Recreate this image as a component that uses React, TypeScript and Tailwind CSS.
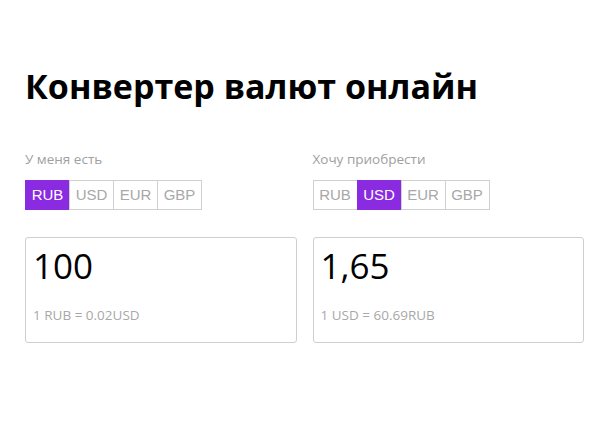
import { useState } from "react";

const currencies = ["RUB", "USD", "EUR", "GBP"];

function CurrencyBlock({
  label,
  selected,
  value,
  rate,
}: {
  label: string;
  selected: string;
  value: string;
  rate: string;
}) {
  const [current, setCurrent] = useState(selected);

  return (
    <div className="flex flex-col">
      <div className="text-[13.5px] text-[#a0a0a0]">{label}</div>

      {/* Переключатель валют */}
      <div className="mt-[11px] flex" style={{ fontFamily: '"Liberation Sans", Arial, sans-serif' }}>
        {currencies.map((c, i) => (
          <button
            key={c}
            onClick={() => setCurrent(c)}
            className={
              c === current
                ? "h-[30px] w-[45px] border border-[#8a2be2] bg-[#8a2be2] text-[15px] text-white " +
                  (i > 0 ? "-ml-px" : "")
                : "h-[30px] w-[45px] border border-[#d0d0d0] bg-white text-[15px] text-[#a8a8a8] " +
                  (i > 0 ? "-ml-px" : "")
            }
          >
            {c}
          </button>
        ))}
      </div>

      {/* Поле ввода */}
      <div className="mt-[27px] h-[106px] rounded-[3px] border border-[#cfcfcf] px-[7px] pt-[6px]">
        <div className="text-[35px] leading-[44px] text-black">{value}</div>
        <div className="mt-[17px] text-[13.5px] text-[#a8a8a8]">{rate}</div>
      </div>
    </div>
  );
}

export default function App() {
  return (
    <div
      className="min-h-screen bg-white px-[25px] pt-[58px] text-black"
      style={{ fontFamily: '"Open Sans", "Noto Sans", sans-serif' }}
    >
      <h1 className="text-[34px] font-bold leading-[56px]">Конвертер валют онлайн</h1>

      <div className="mt-[35px] grid w-[559px] grid-cols-2 gap-4">
        <CurrencyBlock label="У меня есть" selected="RUB" value="100" rate="1 RUB = 0.02USD" />
        <CurrencyBlock label="Хочу приобрести" selected="USD" value="1,65" rate="1 USD = 60.69RUB" />
      </div>
    </div>
  );
}
